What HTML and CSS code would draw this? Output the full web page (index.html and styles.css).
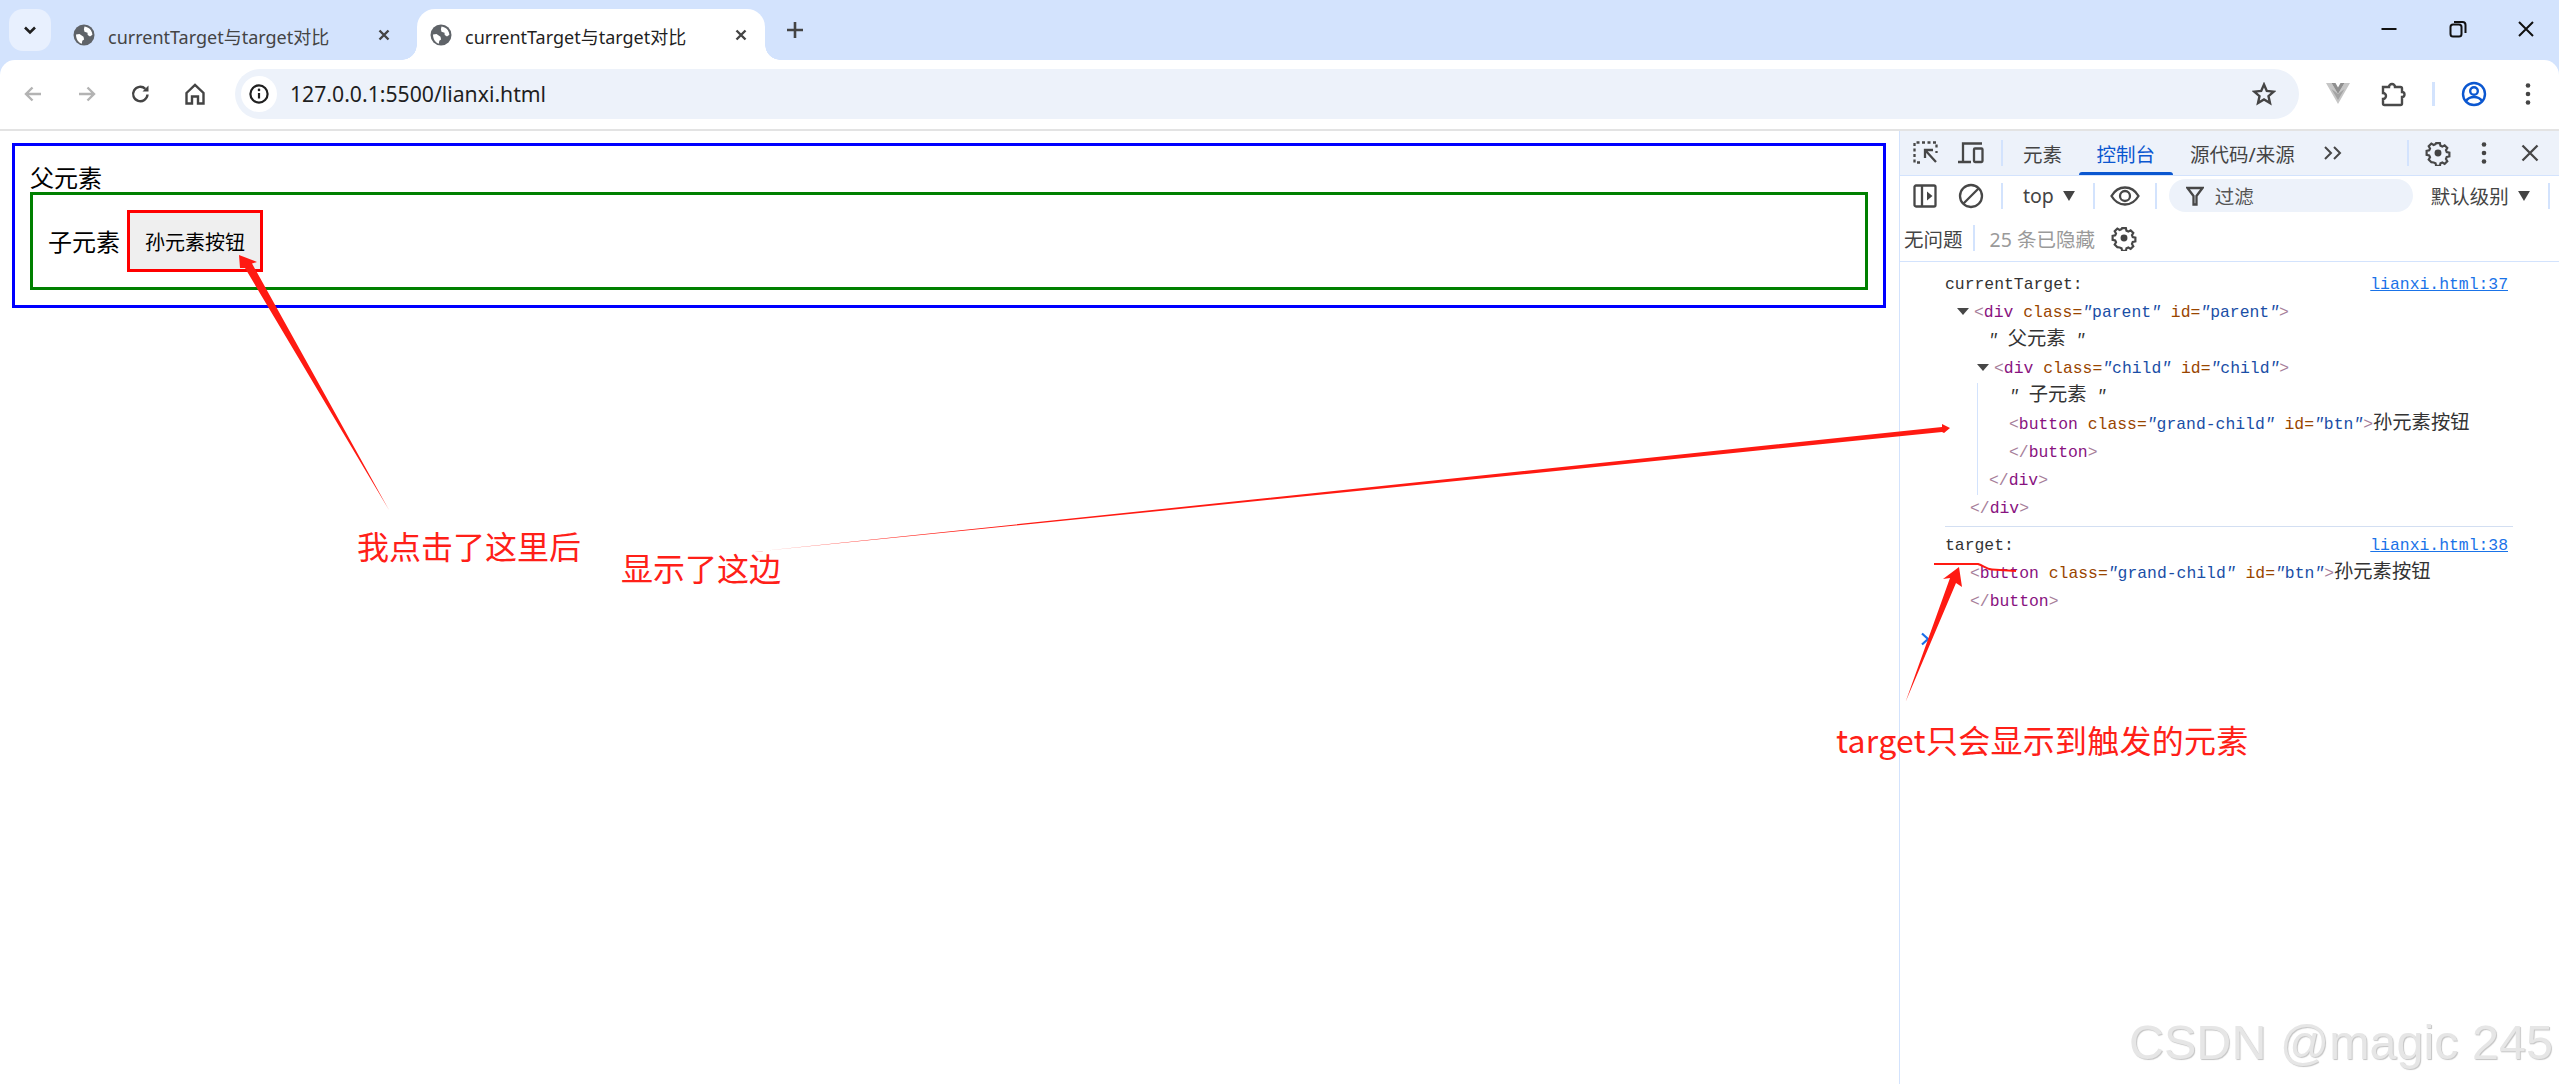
FILE: index.html
```html
<!DOCTYPE html>
<html lang="zh-CN">
<head>
<meta charset="utf-8">
<title>currentTarget与target对比</title>
<link rel="stylesheet" href="styles.css">
</head>
<body>
<div class="browser">
  <header class="tabstrip">
    <div class="tab-search"><svg width="16" height="16" viewBox="0 0 16 16"><path d="M3 5.500 8 10.500 13 5.500" class="ic-dark"/></svg></div>
    <div class="tab">
      <svg class="globe" width="22" height="22" viewBox="0 0 22 22"><circle cx="11" cy="11" r="10.500" fill="#5f6368"/><path d="M11.500 2.500c2.500.3 5 1.600 6.400 3.800.9 1.500 1.400 3 1.500 4.400l-2.400 1.700-2.300-1.300-.2-2.400-3-.9-.6-2.600zM3 10.500l3.500-.5 4 2.800.6 2.700-1.800 1.300-.5 3C5.400 18.700 3 15 3 10.500z" fill="#fff"/></svg>
      <span class="tab-title">currentTarget与target对比</span>
      <svg class="tab-x" width="14" height="14" viewBox="0 0 14 14"><path d="M2.500 2.500l9 9M11.500 2.500l-9 9" class="ic-x"/></svg>
    </div>
    <div class="tab tab-active">
      <svg class="globe" width="22" height="22" viewBox="0 0 22 22"><circle cx="11" cy="11" r="10.500" fill="#5f6368"/><path d="M11.500 2.500c2.500.3 5 1.600 6.400 3.800.9 1.500 1.400 3 1.500 4.400l-2.400 1.700-2.300-1.300-.2-2.400-3-.9-.6-2.600zM3 10.500l3.500-.5 4 2.800.6 2.700-1.800 1.300-.5 3C5.400 18.700 3 15 3 10.500z" fill="#fff"/></svg>
      <span class="tab-title">currentTarget与target对比</span>
      <svg class="tab-x" width="14" height="14" viewBox="0 0 14 14"><path d="M2.500 2.500l9 9M11.500 2.500l-9 9" class="ic-x"/></svg>
    </div>
    <div class="new-tab"><svg width="20" height="20" viewBox="0 0 20 20"><path d="M10 2v16M2 10h16" class="ic-plus"/></svg></div>
    <div class="win-controls">
      <div class="win-btn"><svg width="18" height="18" viewBox="0 0 18 18"><path d="M1.500 9h15" class="ic-win"/></svg></div>
      <div class="win-btn"><svg width="18" height="18" viewBox="0 0 18 18"><rect x="1.500" y="4.500" width="11" height="12" rx="2.500" class="ic-win"/><path d="M5 2h8.500a3 3 0 0 1 3 3v8" class="ic-win"/></svg></div>
      <div class="win-btn win-close"><svg width="18" height="18" viewBox="0 0 18 18"><path d="M2 2l14 14M16 2 2 16" class="ic-win"/></svg></div>
    </div>
  </header>

  <nav class="toolbar">
    <div class="nav-btn"><svg width="20" height="20" viewBox="0 0 20 20"><path d="M18 10H3M9.500 3.500 3 10l6.500 6.500" class="ic-off"/></svg></div>
    <div class="nav-btn"><svg width="20" height="20" viewBox="0 0 20 20"><path d="M2 10h15M10.500 3.500 17 10l-6.500 6.500" class="ic-off"/></svg></div>
    <div class="nav-btn"><svg width="20" height="20" viewBox="0 0 20 20"><path d="M16.500 10.500a7.200 7.200 0 1 1-2.200-5.700" class="ic-nav"/><path d="M17.500 1.500v6h-6z" fill="#444"/></svg></div>
    <div class="nav-btn"><svg width="22" height="22" viewBox="0 0 22 22"><path d="M2.500 10 11 2l8.500 8v10.500h-5.500v-7h-6v7H2.500z" class="ic-nav"/></svg></div>
    <div class="omnibox">
      <div class="site-info"><svg width="20" height="20" viewBox="0 0 20 20"><circle cx="10" cy="10" r="8.600" class="ic-info"/><path d="M10 9v5.500" class="ic-info"/><circle cx="10" cy="5.900" r="1.300" fill="#1f1f1f"/></svg></div>
      <span class="url">127.0.0.1:5500/lianxi.html</span>
      <svg class="star" width="24" height="24" viewBox="0 0 24 24"><path d="M12 2.500l2.800 6.400 6.900.7-5.200 4.600 1.500 6.800-6-3.500-6 3.500 1.500-6.800-5.200-4.600 6.900-.7z" class="ic-nav"/></svg>
    </div>
    <div class="ext-btn vue"><svg width="26" height="22" viewBox="0 0 26 22"><path d="M1 0h5.500L13 11 19.500 0H25L13 21z" fill="#c6c6c6"/><path d="M6.500 0H10.500L13 4.500 15.500 0h4L13 11z" fill="#8f8f8f"/><path d="M6.500 6 13 17 19.500 6 13 11z" fill="#a3a3a3"/></svg></div>
    <div class="ext-btn ext"><svg width="26" height="26" viewBox="0 0 26 26"><path d="M3 6h6a3 3 0 0 1 6 0h5.500a1.500 1.500 0 0 1 1.500 1.500V11a2.500 2.500 0 0 1 0 5v6.500a1.500 1.500 0 0 1-1.500 1.500H4.500A1.500 1.500 0 0 1 3 22.500V18a3 3 0 0 0 0-6z" class="ic-ext"/></svg></div>
    <div class="tb-sep"></div>
    <div class="ext-btn profile"><svg width="26" height="26" viewBox="0 0 26 26"><circle cx="13" cy="13" r="11" class="ic-profile"/><circle cx="13" cy="10" r="3.800" class="ic-profile"/><path d="M5 20c2-3 5-4 8-4s6 1 8 4" class="ic-profile"/></svg></div>
    <div class="ext-btn dots"><svg width="8" height="24" viewBox="0 0 8 24"><circle cx="4" cy="3.500" r="2.300" fill="#444"/><circle cx="4" cy="12" r="2.300" fill="#444"/><circle cx="4" cy="20.500" r="2.300" fill="#444"/></svg></div>
  </nav>

  <main class="workspace">
    <section class="page">
      <div class="parent">
        <span class="page-line">父元素</span>
        <div class="child">
          <span class="child-label">子元素</span>
          <button class="grand-child">孙元素按钮</button>
        </div>
      </div>
    </section>

    <aside class="devtools">
      <div class="dt-tabs">
        <div class="dt-slot"><svg width="26" height="26" viewBox="0 0 26 26"><path d="M2.500 22.500V2.500H24.500V8" class="ic-dash"/><path d="M5 22.500h3M24.500 11v2" class="ic-dash"/><path d="M13 18V10h8M13 10l11 12" class="ic-dt"/></svg></div>
        <div class="dt-slot"><svg width="28" height="26" viewBox="0 0 28 26"><path d="M6 21V3.500h19M1 22h13" class="ic-dt"/><rect x="17" y="8.500" width="8.500" height="13.500" rx="1" class="ic-dt"/></svg></div>
        <div class="dt-sep sep-a"></div>
        <div class="dt-tab">元素</div>
        <div class="dt-tab dt-tab-on">控制台</div>
        <div class="dt-tab">源代码/来源</div>
        <div class="dt-more"><svg width="20" height="16" viewBox="0 0 20 16"><path d="M2 2l6 6-6 6M11 2l6 6-6 6" class="ic-more"/></svg></div>
        <div class="dt-fill"></div>
        <div class="dt-sep sep-r"></div>
        <div class="dt-slot"><svg width="26" height="26" viewBox="0 0 24 24"><path d="M10 2h4l.6 2.700 2 .9 2.400-1.400 2.800 2.800-1.400 2.400.8 2 2.800.6v4l-2.800.6-.8 2 1.400 2.400-2.800 2.800-2.400-1.400-2 .8-.6 2.800h-4l-.6-2.800-2-.8L5 22l-2.800-2.800L3.600 16.800l-.9-2L0 14.200v-4l2.700-.6.9-2L2.200 5.200 5 2.400l2.400 1.400 2-.9z" transform="translate(1.500 1.200) scale(.875)" class="ic-dt"/><circle cx="12" cy="12" r="3.200" fill="#444"/></svg></div>
        <div class="dt-slot"><svg width="8" height="24" viewBox="0 0 8 24"><circle cx="4" cy="3.500" r="2.300" fill="#444"/><circle cx="4" cy="12" r="2.300" fill="#444"/><circle cx="4" cy="20.500" r="2.300" fill="#444"/></svg></div>
        <div class="dt-slot"><svg width="20" height="20" viewBox="0 0 20 20"><path d="M2.500 2.500l15 15M17.500 2.500l-15 15" class="ic-dt"/></svg></div>
      </div>

      <div class="dt-filter">
        <div class="dt-slot"><svg width="26" height="26" viewBox="0 0 26 26"><rect x="2.500" y="2.500" width="21" height="21" rx="1.500" class="ic-dt"/><path d="M10 2.500v21" class="ic-dt"/><path d="M15 8.500l5.500 4.500-5.500 4.500z" fill="#444"/></svg></div>
        <div class="dt-slot"><svg width="26" height="26" viewBox="0 0 26 26"><circle cx="13" cy="13" r="11" class="ic-dt"/><path d="M5.500 20.500l15-15" class="ic-dt"/></svg></div>
        <div class="dt-sep sep-a"></div>
        <div class="ctx">top</div>
        <svg class="caret caret-ctx" width="12" height="10" viewBox="0 0 13 11"><path d="M0 0h13L6.500 11z" fill="#444"/></svg>
        <div class="dt-sep sep-b"></div>
        <svg class="eye" width="30" height="20" viewBox="0 0 30 20"><path d="M1.500 10C5 4 10 1.500 15 1.500S25 4 28.500 10C25 16 20 18.500 15 18.500S5 16 1.500 10z" class="ic-dt"/><circle cx="15" cy="10" r="5" class="ic-dt"/></svg>
        <div class="dt-sep sep-c"></div>
        <div class="filter-box">
          <svg width="18" height="20" viewBox="0 0 18 20"><path d="M1.500 2h15L10.500 10v8.500H7.500V10z" class="ic-dt"/></svg>
          <span class="filter-text">过滤</span>
        </div>
        <div class="level">默认级别</div>
        <svg class="caret caret-level" width="12" height="10" viewBox="0 0 13 11"><path d="M0 0h13L6.500 11z" fill="#444"/></svg>
        <div class="dt-sep sep-d"></div>
      </div>

      <div class="dt-issues">
        <span class="issue-text">无问题</span>
        <div class="dt-sep sep-e"></div>
        <span class="issue-hidden">25 条已隐藏</span>
        <svg class="issue-gear" width="26" height="26" viewBox="0 0 24 24"><path d="M10 2h4l.6 2.700 2 .9 2.400-1.400 2.800 2.800-1.400 2.400.8 2 2.800.6v4l-2.800.6-.8 2 1.400 2.400-2.800 2.800-2.400-1.400-2 .8-.6 2.800h-4l-.6-2.800-2-.8L5 22l-2.800-2.800L3.600 16.800l-.9-2L0 14.200v-4l2.700-.6.9-2L2.200 5.200 5 2.400l2.400 1.400 2-.9z" transform="translate(1.500 1.200) scale(.875)" class="ic-dt"/><circle cx="12" cy="12" r="3.200" fill="#444"/></svg>
      </div>

      <div class="console">
        <div class="msg msg-first">
          <div class="row row-head"><span>currentTarget:</span><a class="src">lianxi.html:37</a></div>
          <div class="row in-1"><i class="tri"></i><span class="br">&lt;</span><span class="tag">div</span> <span class="an">class=</span><span class="av"><i>"</i>parent<i>"</i></span> <span class="an">id=</span><span class="av"><i>"</i>parent<i>"</i></span><span class="br">&gt;</span></div>
          <div class="row in-2"><span class="text"><i>"</i> <span class="cjk">父元素</span> <i>"</i></span></div>
          <div class="row in-3"><i class="tri"></i><span class="br">&lt;</span><span class="tag">div</span> <span class="an">class=</span><span class="av"><i>"</i>child<i>"</i></span> <span class="an">id=</span><span class="av"><i>"</i>child<i>"</i></span><span class="br">&gt;</span></div>
          <div class="nest">
            <div class="row in-4"><span class="text"><i>"</i> <span class="cjk">子元素</span> <i>"</i></span></div>
            <div class="row in-4"><span class="br">&lt;</span><span class="tag">button</span> <span class="an">class=</span><span class="av"><i>"</i>grand-child<i>"</i></span> <span class="an">id=</span><span class="av"><i>"</i>btn<i>"</i></span><span class="br">&gt;</span><span class="cjk">孙元素按钮</span></div>
            <div class="row in-4"><span class="br">&lt;/</span><span class="tag">button</span><span class="br">&gt;</span></div>
            <div class="row in-5"><span class="br">&lt;/</span><span class="tag">div</span><span class="br">&gt;</span></div>
          </div>
          <div class="row in-6"><span class="br">&lt;/</span><span class="tag">div</span><span class="br">&gt;</span></div>
        </div>
        <div class="msg">
          <div class="row row-head"><span>target:</span><a class="src">lianxi.html:38</a></div>
          <div class="row in-6"><span class="br">&lt;</span><span class="tag">button</span> <span class="an">class=</span><span class="av"><i>"</i>grand-child<i>"</i></span> <span class="an">id=</span><span class="av"><i>"</i>btn<i>"</i></span><span class="br">&gt;</span><span class="cjk">孙元素按钮</span></div>
          <div class="row in-6"><span class="br">&lt;/</span><span class="tag">button</span><span class="br">&gt;</span></div>
        </div>
        <svg class="prompt" width="10" height="14" viewBox="0 0 10 14"><path d="M2 1.500 8 7 2 12.500" class="ic-prompt"/></svg>
      </div>
    </aside>
  </main>
</div>

<div class="marks">
  <svg class="marks-svg" width="2559" height="1084" viewBox="0 0 2559 1084">
    <path class="ink" d="M239 255 257 262 252 263.500 389 510 245 268 240 268z"/>
    <path class="ink" d="M1950 428 1942 424 1942 427 753 552 1942 432 1944 433z"/>
    <path class="ink" d="M1959 567 1962 587 1956 583 1905.500 702 1950 578 1943 579z"/>
    <path class="ink-line" d="M1934 564H1978C1984 566 1986 569 1992 569.500L2016 571"/>
  </svg>
  <span class="note note-click">我点击了这里后</span>
  <span class="note note-show">显示了这边</span>
  <span class="note note-target">target只会显示到触发的元素</span>
  <span class="watermark">CSDN @magic 245</span>
</div>
</body>
</html>
```
FILE: styles.css
```css
* { box-sizing: border-box; }
html, body { margin: 0; height: 100%; overflow: hidden; background: #fff; }
body { position: relative; width: 2559px; height: 1084px; font-family: "Noto Sans", "Noto Sans CJK SC", sans-serif; color: #1f1f1f; }
.browser { display: flex; flex-direction: column; height: 100%; background: #d3e3fd; }
svg { display: block; flex: none; }

.ic-dark { fill: none; stroke: #1f1f1f; stroke-width: 2.600; }
.ic-x { fill: none; stroke: #444; stroke-width: 2.400; }
.ic-plus { fill: none; stroke: #444; stroke-width: 2.600; }
.ic-win { fill: none; stroke: #111; stroke-width: 2; }
.ic-off { fill: none; stroke: #b3b3b3; stroke-width: 2.400; }
.ic-nav { fill: none; stroke: #444; stroke-width: 2.400; }
.ic-info { fill: none; stroke: #1f1f1f; stroke-width: 2.200; }
.ic-ext { fill: none; stroke: #4a4a4a; stroke-width: 2.400; }
.ic-profile { fill: none; stroke: #0b57d0; stroke-width: 2.400; }
.ic-dt { fill: none; stroke: #474747; stroke-width: 2.300; }
.ic-dash { fill: none; stroke: #474747; stroke-width: 2.300; stroke-dasharray: 3 2.500; }
.ic-more { fill: none; stroke: #474747; stroke-width: 2; }
.ic-prompt { fill: none; stroke: #1a6fe8; stroke-width: 2.200; }

/* tab strip */
.tabstrip { display: flex; align-items: flex-start; height: 60px; flex: none; }
.tab-search { display: flex; align-items: center; justify-content: center; width: 42px; height: 42px; margin: 9px 0 0 9px; border-radius: 14px; background: #e8f0fe; }
.tab { position: relative; display: flex; align-items: center; width: 348px; height: 51px; margin: 9px 0 0 9px; padding: 0 17px 0 13px; border-radius: 18px 18px 0 0; font-size: 18px; color: #444; }
.globe { margin-right: 13px; }
.tab-title { flex: 1; white-space: nowrap; margin-top: 2px; }
.tab-active { background: #fff; color: #1f1f1f; }
.tab-active::before, .tab-active::after { content: ""; position: absolute; bottom: 0; width: 15px; height: 15px; }
.tab-active::before { left: -15px; background: radial-gradient(circle at 0 0, transparent 14.500px, #fff 15px); }
.tab-active::after { right: -15px; background: radial-gradient(circle at 100% 0, transparent 14.500px, #fff 15px); }
.new-tab { display: flex; align-items: center; justify-content: center; width: 32px; height: 32px; margin: 14px 0 0 14px; }
.win-controls { display: flex; margin-left: auto; }
.win-btn { display: flex; align-items: center; justify-content: center; width: 69px; height: 58px; }
.win-close { width: 67px; }

/* toolbar */
.toolbar { display: flex; align-items: center; height: 71px; flex: none; padding: 0 0 2px 6px; background: #fff; border-bottom: 2px solid #e3e3e3; border-radius: 15px 15px 0 0; }
.nav-btn { display: flex; align-items: center; justify-content: center; width: 54px; height: 46px; }
.omnibox { display: flex; align-items: center; width: 2064px; height: 50px; margin-left: 13px; padding: 0 23px 0 6px; border-radius: 25px; background: #edf2fa; }
.site-info { display: flex; align-items: center; justify-content: center; width: 36px; height: 36px; border-radius: 50%; background: #fff; }
.url { margin-left: 13px; font-size: 21.200px; color: #1f1f1f; }
.star { margin-left: auto; }
.ext-btn { display: flex; align-items: center; justify-content: center; width: 46px; height: 46px; }
.vue { margin-left: 16px; }
.ext { margin-left: 9px; }
.tb-sep { width: 3px; height: 24px; margin-left: 16px; background: #d3e3fd; }
.profile { margin-left: 16px; }
.dots { margin-left: 8px; }

/* layout */
.workspace { display: flex; flex: 1; min-height: 0; background: #fff; }

/* inspected page */
.page { flex: none; width: 1899px; padding: 12px 13px 0 12px; }
.parent { padding: 15px; border: 3px solid #00f; font-family: "Noto Sans CJK SC", sans-serif; font-size: 24px; color: #000; }
.page-line { display: block; height: 31px; line-height: 31px; }
.child { display: flex; align-items: center; padding: 15px; border: 3px solid #008000; }
.child-label { margin-right: 7px; line-height: 32px; }
.grand-child { width: 136px; height: 62px; padding: 0; border: 3px solid #f00; background: #efefef; font-family: "Noto Sans CJK SC", sans-serif; font-size: 20px; color: #000; }

/* devtools */
.devtools { display: flex; flex-direction: column; flex: none; width: 660px; border-left: 1px solid #d3e3fd; font-size: 19.500px; color: #444; }
.dt-tabs { display: flex; align-items: center; height: 45px; padding: 0 6px 0 2px; background: #edf2fa; border-bottom: 1px solid #d3e3fd; flex: none; }
.dt-slot { display: flex; align-items: center; justify-content: center; width: 46px; height: 40px; flex: none; }
.dt-sep { width: 2px; height: 26px; background: #d3e3fd; flex: none; }
.sep-a { margin-left: 7px; }
.dt-tab { display: flex; align-items: center; height: 44px; padding: 0 17.500px; white-space: nowrap; }
.dt-tabs .dt-tab:nth-of-type(4) { margin-left: 3px; padding: 0 17px; }
.dt-tab-on { position: relative; color: #0b57d0; }
.dt-tab-on::after { content: ""; position: absolute; left: 0; right: 0; bottom: 0; height: 3px; border-radius: 3px 3px 0 0; background: #0b57d0; }
.dt-more { display: flex; justify-content: center; width: 34px; margin-left: 4px; }
.dt-fill { flex: 1; }
.sep-r { margin-right: 6px; }

.dt-filter { display: flex; align-items: center; height: 39px; padding-left: 2px; flex: none; }
.ctx { margin-left: 20px; font-size: 19.500px; }
.caret-ctx { margin-left: 9px; }
.sep-b { margin-left: 18px; }
.eye { margin-left: 15px; }
.sep-c { margin-left: 15px; }
.filter-box { display: flex; align-items: center; width: 244px; height: 33px; margin-left: 12px; padding-left: 17px; border-radius: 17px; background: #edf2fa; }
.filter-text { margin-left: 11px; color: #555; }
.level { margin-left: 18px; }
.caret-level { margin-left: 9px; }
.sep-d { margin-left: 18px; }

.dt-issues { display: flex; align-items: center; height: 47px; padding-left: 4px; border-bottom: 1px solid #d3e3fd; flex: none; }
.sep-e { margin-left: 10px; }
.issue-hidden { margin-left: 15px; color: #9a9a9a; }
.issue-gear { margin-left: 16px; }

/* console */
.console { position: relative; padding: 9px 46px 0 45px; font-family: "Liberation Mono", "Noto Sans CJK SC", monospace; font-size: 16.400px; color: #333; }
.msg-first { padding-bottom: 3px; margin-bottom: 5px; border-bottom: 1px solid #d3dff2; }
.msg { width: 568px; }
.row { height: 28px; line-height: 28px; white-space: pre; }
.row i { font-style: italic; }
.row-head { display: flex; justify-content: space-between; padding-right: 5px; }
.src { color: #1a73e8; text-decoration: underline; }
.in-1 { margin-left: 12px; }
.in-2 { margin-left: 43px; }
.in-3 { margin-left: 32px; }
.nest { margin-left: 32px; border-left: 1px solid #d3e3fd; }
.in-4 { margin-left: 31px; }
.in-5 { margin-left: 11px; }
.in-6 { margin-left: 25px; }
.tri { display: inline-block; width: 0; height: 0; margin-right: 5px; vertical-align: 2px; border-style: solid; border-width: 7px 6px 0; border-color: #474747 transparent transparent; }
.br { color: #a7809a; }
.tag { color: #881280; }
.an { color: #994500; }
.av { color: #1a4ea6; }
.text { color: #333; }
.cjk { font-family: "Noto Sans CJK SC", sans-serif; font-size: 19.300px; line-height: 1; color: #333; }
.prompt { position: absolute; left: 20px; top: 370px; }

/* annotations painted on top of the screenshot */
.marks { position: absolute; inset: 0; pointer-events: none; }
.marks-svg { position: absolute; left: 0; top: 0; }
.ink { fill: #ff1a12; stroke: none; }
.ink-line { fill: none; stroke: #ff1a12; stroke-width: 2; }
.note { position: absolute; font-family: "Noto Sans CJK SC", sans-serif; font-size: 32px; line-height: 32px; color: #ff2018; white-space: nowrap; }
.note-click { left: 357px; top: 529px; }
.note-show { left: 621px; top: 551px; }
.note-target { left: 1836px; top: 723px; letter-spacing: .25px; }
.watermark { position: absolute; left: 2129px; top: 1014px; font-family: "Liberation Sans", sans-serif; font-size: 48.500px; line-height: 56px; color: #e6e6e6; text-shadow: 1px 1px 1px #c4c4c4; white-space: nowrap; }
```
